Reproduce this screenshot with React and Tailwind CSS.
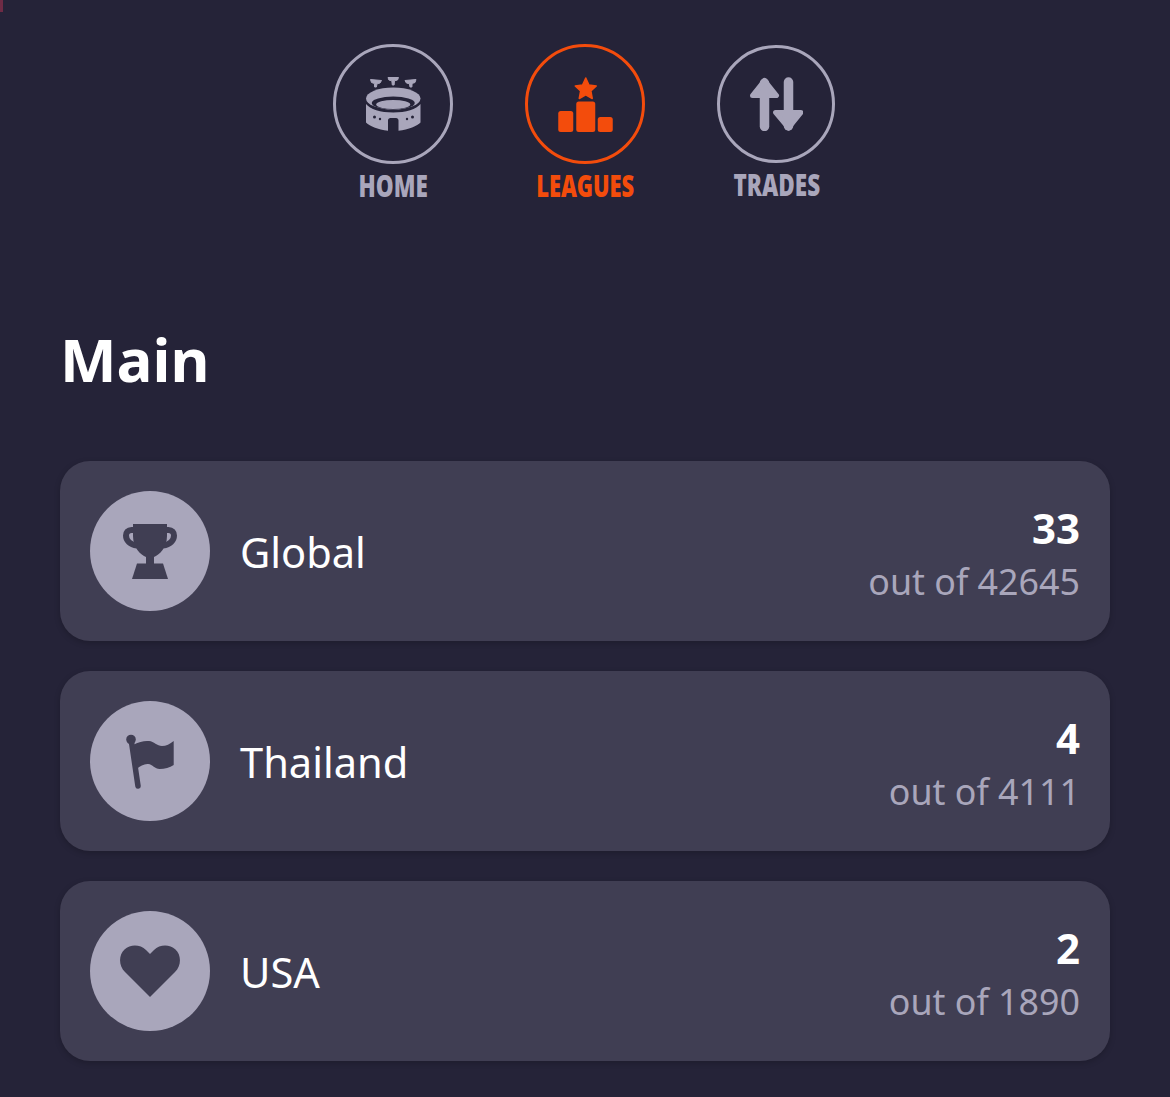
const Stadium = () => (
  <svg viewBox="0 0 55 54" className="w-[55px] h-[54px]" fill="#a9a6bb">
    <g stroke="#a9a6bb" strokeWidth="1" strokeLinejoin="round">
      <path d="M4.500 2.500L15.500 3.500 14 6l-3 .8-.6 3.200H8.600L8.400 6.500 5.500 5.500z" />
      <path d="M22 .5h10.500L31.500 3l-3 .8-.4 4.200h-1.800l-.5-4.200-2.900-.8z" />
      <path d="M39 3.500L50 2.500 49 5.500l-2.900 1-.2 3.500H44l-.6-3.200-3-.8z" />
    </g>
    <path d="M0 27c0 2 0 18 0 18.500C3 49 12 52.500 22 53.800V43.500c0-1.500 1-2.500 2.500-2.500h5.500c1.500 0 2.500 1 2.500 2.500v10.300c10-1.300 19-4.800 22-8.300V27c-4 5-14.500 8.500-27.300 8.500S4 32 0 27z" />
    <ellipse cx="27.250" cy="21.500" rx="27.250" ry="11" />
    <ellipse cx="27.250" cy="26" rx="21.500" ry="6.500" fill="#252338" />
    <ellipse cx="27.250" cy="27.500" rx="17" ry="4.500" />
    <g fill="#252338">
      <circle cx="8.500" cy="40" r="1.500" />
      <circle cx="14" cy="42" r="1.200" />
      <circle cx="41" cy="42" r="1.200" />
      <circle cx="46.500" cy="40" r="1.500" />
    </g>
  </svg>
);

const Podium = () => (
  <svg viewBox="0 0 54.500 55" className="w-[55px] h-[55px]" fill="#f34c0c">
    <path d="M27.500 1l3.200 7 7.300 .9-5.400 5.100 1.400 7.500-6.500-3.700-6.500 3.700 1.400-7.500L17 8.900l7.300-.9z" stroke="#f34c0c" strokeWidth="1.500" strokeLinejoin="round" />
    <rect x="18" y="24.500" width="19" height="30.500" rx="2.500" />
    <rect x="0" y="34" width="15" height="21" rx="2.500" />
    <rect x="39.500" y="40" width="15" height="15" rx="2.500" />
  </svg>
);

const Arrows = () => (
  <svg viewBox="0 0 54 54" className="w-[54px] h-[54px]" fill="none" stroke="#a9a6bb" strokeLinecap="round" strokeLinejoin="round">
    <path d="M15.500 49.500V6" strokeWidth="9.500" />
    <path d="M3.500 18.500L15.500 3.500 27.500 18.500z" fill="#a9a6bb" strokeWidth="5" />
    <path d="M39.500 5v44" strokeWidth="9.500" />
    <path d="M26.500 35.500L39.500 51l12.500-15.500z" fill="#a9a6bb" strokeWidth="5" />
  </svg>
);

const Trophy = () => (
  <svg viewBox="0 0 54 55" className="w-[54px] h-[55px]" fill="#403e53">
    <path d="M10 0H44V12C44 24 36 31 31 33V40H23V33C18 31 10 24 10 12Z" />
    <path d="M12 6H8.500C5 6 3 8.500 3 11.500 3 16.500 7 20.500 14 21.500" fill="none" stroke="#403e53" strokeWidth="6" />
    <path d="M42 6h3.500C49 6 51 8.500 51 11.500 51 16.500 47 20.500 40 21.500" fill="none" stroke="#403e53" strokeWidth="6" />
    <path d="M14 39.500H40L45 55H9Z" />
  </svg>
);

const Flag = () => (
  <svg viewBox="0 0 48 55" className="w-[48px] h-[55px]" fill="#403e53">
    <circle cx="5" cy="5.500" r="4.800" />
    <path d="M5.500 8L12 52" fill="none" stroke="#403e53" strokeWidth="5.500" strokeLinecap="round" />
    <path d="M8 10.500C13 8 18 6.500 23 7c5 .5 8 5 13 5 4 0 8-2 11.700-5v24c-4 2.500-9 4-14 4-5 0-7-4.500-11.500-5-4-.4-8 2-11.500 5z" />
  </svg>
);

const Heart = () => (
  <svg viewBox="0 0 60 52" className="w-[60px] h-[52px]" fill="#403e53">
    <path d="M30 52L5 27C-1.500 20.500-1.500 10 4.500 4.500 10.500-1 20-.8 26 5l4 4 4-4C40-.8 49.500-1 55.500 4.500 61.500 10 61.500 20.500 55 27z" />
  </svg>
);

const navItems = [
  {
    label: "HOME",
    icon: <Stadium />,
    circle: "flex h-[120px] w-[120px] items-center justify-center rounded-full border-[3px] border-[#a9a6bb]",
    text: "mt-[2px] scale-x-[0.75] font-['Open_Sans',sans-serif] text-[30px] leading-[40px] font-extrabold whitespace-nowrap text-[#a9a6bb]",
  },
  {
    label: "LEAGUES",
    icon: <Podium />,
    circle: "flex h-[120px] w-[120px] items-center justify-center rounded-full border-[3px] border-[#f34c0c]",
    text: "mt-[2px] scale-x-[0.73] font-['Open_Sans',sans-serif] text-[30px] leading-[40px] font-extrabold whitespace-nowrap text-[#f34c0c]",
  },
  {
    label: "TRADES",
    icon: <Arrows />,
    circle: "mt-[1px] mr-[2px] flex h-[118px] w-[118px] items-center justify-center rounded-full border-[3px] border-[#a9a6bb]",
    text: "mt-[2px] mr-[1px] scale-x-[0.75] font-['Open_Sans',sans-serif] text-[30px] leading-[40px] font-extrabold whitespace-nowrap text-[#a9a6bb]",
  },
];

const rows = [
  { name: "Global", rank: "33", total: "out of 42645", icon: <Trophy /> },
  { name: "Thailand", rank: "4", total: "out of 4111", icon: <Flag /> },
  { name: "USA", rank: "2", total: "out of 1890", icon: <Heart /> },
];

export default function App() {
  return (
    <div className="relative h-[1097px] w-[1170px] overflow-hidden bg-[#252338] font-['Noto_Sans',sans-serif] text-white">
      <div className="absolute top-0 left-0 h-[12px] w-[3px] bg-[#6e2b45]" />
      <nav className="flex justify-center gap-[72px] pt-11">
        {navItems.map((item) => (
          <div key={item.label} className="flex w-[120px] flex-col items-center">
            <div className={item.circle}>{item.icon}</div>
            <span className={item.text}>{item.label}</span>
          </div>
        ))}
      </nav>

      <h1 className="mt-[112px] pl-[60px] text-[60px] leading-[82px] font-bold">Main</h1>

      <div className="mx-[60px] mt-[61px] flex flex-col gap-[30px]">
        {rows.map((row) => (
          <div
            key={row.name}
            className="flex h-[180px] items-center rounded-[30px] bg-[#403e53] px-[30px] shadow-[0_2px_6px_rgba(0,0,0,0.2)]"
          >
            <div className="flex h-[120px] w-[120px] shrink-0 items-center justify-center rounded-full bg-[#a9a6bb]">
              {row.icon}
            </div>
            <div className="ml-[30px] flex-1 pt-[2px] text-[41.6px] leading-[57px]">{row.name}</div>
            <div className="pt-[5px] text-right">
              <div className="text-[42px] leading-[54px] font-bold">{row.rank}</div>
              <div className="text-[35.8px] leading-[52px] text-[#a9a6bb]">{row.total}</div>
            </div>
          </div>
        ))}
      </div>
    </div>
  );
}
